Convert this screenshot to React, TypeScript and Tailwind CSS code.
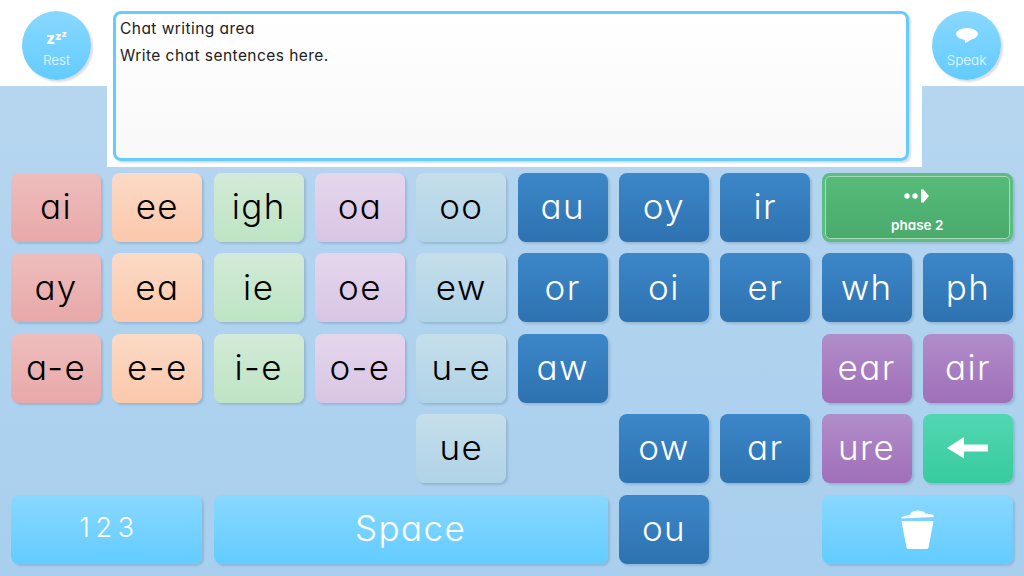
import type { ReactNode } from 'react'

const FONT = "font-['Inter',sans-serif] [font-feature-settings:'cv11']"

const TONES = {
  red: 'bg-gradient-to-b from-[#efbdbd] to-[#e8a8a8] text-black',
  orange: 'bg-gradient-to-b from-[#fcdac6] to-[#fbc8ab] text-black',
  green: 'bg-gradient-to-b from-[#d2ead8] to-[#bee4c3] text-black',
  lilac: 'bg-gradient-to-b from-[#e5d6ec] to-[#d8c5e4] text-black',
  pale: 'bg-gradient-to-b from-[#c5deeb] to-[#afd3e6] text-black',
  blue: 'bg-gradient-to-b from-[#3c87c9] to-[#2e72b0] text-white',
  violet: 'bg-gradient-to-b from-[#b18dca] to-[#a06fb9] text-white',
  teal: 'bg-gradient-to-b from-[#50d7b1] to-[#38cb9f] text-white',
  sky: 'bg-gradient-to-b from-[#88d8ff] to-[#62ccff] text-white',
}

type Tone = keyof typeof TONES

function Key({ tone, label, className = '', children }: { tone: Tone; label?: string; className?: string; children?: ReactNode }) {
  return (
    <button
      className={`flex h-[69px] items-center justify-center rounded-lg pb-[2px] text-[35px] font-light tracking-[1.4px] shadow-[2px_2px_2px_rgba(40,70,100,0.18)] ${TONES[tone]} ${className}`}
    >
      {label}
      {children}
    </button>
  )
}

function Round({ icon, label }: { icon: ReactNode; label: string }) {
  return (
    <button className="flex h-[69px] w-[69px] flex-col items-center rounded-full bg-gradient-to-b from-[#88d8ff] to-[#62ccff] pt-[17px] text-white shadow-[2px_2px_2px_rgba(0,0,0,0.14)]">
      <div className="flex h-[15px] items-center">{icon}</div>
      <span className="mt-[9px] text-[13.5px] font-light leading-[16px] text-white/85">{label}</span>
    </button>
  )
}

export default function App() {
  return (
    <div className={`flex h-[576px] w-[1024px] flex-col overflow-hidden bg-gradient-to-b from-[#b9d7f0] to-[#a8cfee] ${FONT}`}>
      {/* Top area */}
      <div className="grid h-[167px] grid-cols-[107px_815px_102px]">
        <div className="flex h-[86px] items-start justify-end bg-white pt-[11px] pr-[16px]">
          <Round
            label="Rest"
            icon={
              <span className="flex items-baseline font-extrabold leading-none">
                <span className="translate-y-[3px] text-[15px]">z</span>
                <span className="-translate-y-[1px] text-[11px]">z</span>
                <span className="-translate-y-[4px] text-[9px]">z</span>
              </span>
            }
          />
        </div>
        <div className="bg-white pt-[11px] pr-[13px] pl-[6px]">
          <div className="h-[150px] rounded-lg border-[3px] border-[#66ccff] bg-gradient-to-b from-white to-[#f8f8f8] px-[4px] pt-[3px] text-[15.5px] font-normal tracking-[0.45px] text-[#222] shadow-[2px_2px_2px_rgba(0,0,0,0.14)]">
            <p className="h-[27px] leading-[24px]">Chat writing area</p>
            <p className="leading-[24px]">Write chat sentences here.</p>
          </div>
        </div>
        <div className="flex h-[86px] items-start justify-start bg-white pt-[11px] pl-[10px]">
          <Round
            label="Speak"
            icon={
              <svg width="22" height="15" viewBox="0 0 22 15" fill="white">
                <ellipse cx="11" cy="6" rx="11" ry="6" />
                <path d="M8 10.5 L9.5 15 L17 10.5 Z" />
              </svg>
            }
          />
        </div>
      </div>

      {/* Keyboard */}
      <div className="mt-[6px] grid grid-cols-10 gap-x-[11.2px] gap-y-[11.4px] px-[11px]">
        <Key tone="red" label="ai" />
        <Key tone="orange" label="ee" />
        <Key tone="green" label="igh" />
        <Key tone="lilac" label="oa" />
        <Key tone="pale" label="oo" />
        <Key tone="blue" label="au" />
        <Key tone="blue" label="oy" />
        <Key tone="blue" label="ir" />
        <button className="col-span-2 flex h-[69px] flex-col items-center rounded-lg border-[3px] border-[#5cbd80] bg-gradient-to-b from-[#56bb79] to-[#4aaa6c] text-white shadow-[2px_2px_2px_rgba(40,70,100,0.18)] outline outline-1 -outline-offset-[4px] outline-[#a8dcb9]">
          <svg className="mt-[13px]" width="26" height="14" viewBox="0 0 26 14" fill="white">
            <circle cx="3" cy="7" r="2.7" />
            <circle cx="11" cy="7" r="2.7" />
            <path d="M17 0.5 L19.5 0.5 L25 7 L19.5 13.5 L17 13.5 Z" />
          </svg>
          <span className="mt-[14px] text-[13.5px] font-semibold leading-[16px]">phase 2</span>
        </button>

        <Key tone="red" label="ay" />
        <Key tone="orange" label="ea" />
        <Key tone="green" label="ie" />
        <Key tone="lilac" label="oe" />
        <Key tone="pale" label="ew" />
        <Key tone="blue" label="or" />
        <Key tone="blue" label="oi" />
        <Key tone="blue" label="er" />
        <Key tone="blue" label="wh" />
        <Key tone="blue" label="ph" />

        <Key tone="red" label="a-e" />
        <Key tone="orange" label="e-e" />
        <Key tone="green" label="i-e" />
        <Key tone="lilac" label="o-e" />
        <Key tone="pale" label="u-e" />
        <Key tone="blue" label="aw" />
        <Key tone="violet" label="ear" className="col-start-9" />
        <Key tone="violet" label="air" />

        <Key tone="pale" label="ue" className="col-start-5" />
        <Key tone="blue" label="ow" className="col-start-7" />
        <Key tone="blue" label="ar" />
        <Key tone="violet" label="ure" />
        <Key tone="teal">
          <svg width="42" height="22" viewBox="0 0 42 22" fill="white">
            <path d="M0 11 L17 0 V7.5 H41 V14.5 H17 V21.5 Z" />
          </svg>
        </Key>

        <Key tone="sky" label="1 2 3" className="col-span-2 !text-[27px] !tracking-normal [word-spacing:-2px]" />
        <Key tone="sky" label="Space" className="col-span-4" />
        <Key tone="blue" label="ou" />
        <Key tone="sky" className="col-span-2 col-start-9">
          <svg className="mt-[2px]" width="33" height="39" viewBox="0 0 33 39" fill="white">
            <path d="M0 8.5 Q0 6.8 3 6.3 L9 4.8 Q10 1 16 0.5 Q23 0.5 24 3.2 L31 4.5 Q33 5 33 7 Z" />
            <path d="M0.5 11 H32.5 L27.5 37.5 Q27 39 25.5 39 H7.5 Q6 39 5.5 37.5 Z" />
          </svg>
        </Key>
      </div>
    </div>
  )
}
